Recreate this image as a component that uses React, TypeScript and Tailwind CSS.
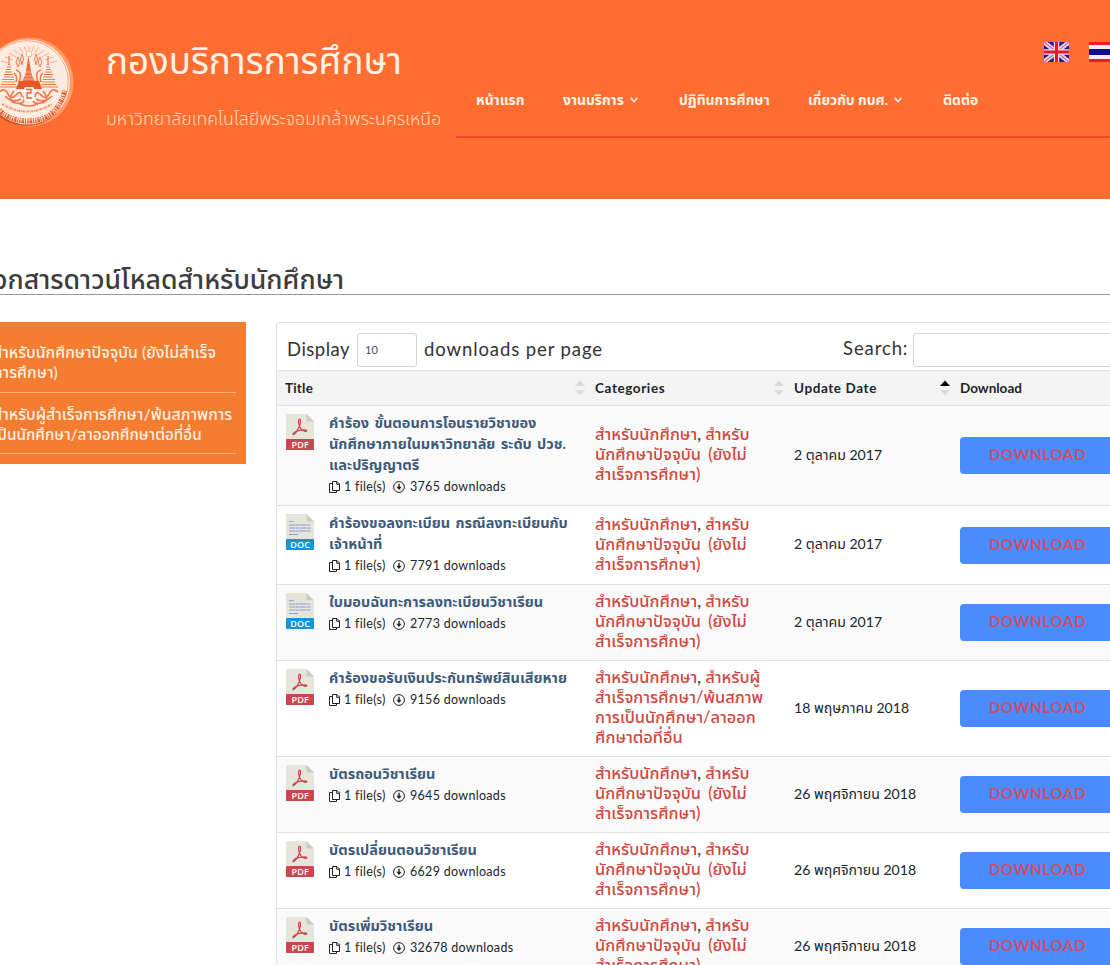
import React from "react";

type Doc = {
  kind: "PDF" | "DOC";
  title: string[];
  count: string;
  cats: string[];
  date: string;
  height: string;
};

const CURRENT = ["สำหรับ", "นักศึกษาปัจจุบัน (ยังไม่", "สำเร็จการศึกษา)"];
const GRADUATED = ["สำหรับผู้", "สำเร็จการศึกษา/พ้นสภาพ", "การเป็นนักศึกษา/ลาออก", "ศึกษาต่อที่อื่น"];

const DOCS: Doc[] = [
  {
    kind: "PDF",
    title: ["คำร้อง ขั้นตอนการโอนรายวิชาของ", "นักศึกษาภายในมหาวิทยาลัย ระดับ ปวช.", "และปริญญาตรี"],
    count: "3765",
    cats: CURRENT,
    date: "2 ตุลาคม 2017",
    height: "h-[100px]",
  },
  {
    kind: "DOC",
    title: ["คำร้องขอลงทะเบียน กรณีลงทะเบียนกับ", "เจ้าหน้าที่"],
    count: "7791",
    cats: CURRENT,
    date: "2 ตุลาคม 2017",
    height: "h-[79px]",
  },
  { kind: "DOC", title: ["ใบมอบฉันทะการลงทะเบียนวิชาเรียน"], count: "2773", cats: CURRENT, date: "2 ตุลาคม 2017", height: "h-[76px]" },
  { kind: "PDF", title: ["คำร้องขอรับเงินประกันทรัพย์สินเสียหาย"], count: "9156", cats: GRADUATED, date: "18 พฤษภาคม 2018", height: "h-[96px]" },
  { kind: "PDF", title: ["บัตรถอนวิชาเรียน"], count: "9645", cats: CURRENT, date: "26 พฤศจิกายน 2018", height: "h-[76px]" },
  { kind: "PDF", title: ["บัตรเปลี่ยนตอนวิชาเรียน"], count: "6629", cats: CURRENT, date: "26 พฤศจิกายน 2018", height: "h-[76px]" },
  { kind: "PDF", title: ["บัตรเพิ่มวิชาเรียน"], count: "32678", cats: CURRENT, date: "26 พฤศจิกายน 2018", height: "h-[76px]" },
];

function Seal() {
  return (
    <svg className="mt-[35px] -ml-[20px] h-[94px] w-[96px] shrink-0" viewBox="-20 35 96 94">
      <circle cx="29" cy="82" r="44.5" fill="#ff9a6b" />
      <circle cx="26.5" cy="83.500" r="42.500" fill="#b8431a" opacity="0.8" />
      <circle cx="27.5" cy="82" r="42.5" fill="#ffece0" />
      <circle cx="27" cy="82" r="41.300" fill="none" stroke="#f08a60" strokeWidth="0.7" />
      <g stroke="#f29a76" fill="none" strokeWidth="0.800">
        <path d="M29 46V50M24 46l2 5M34 46l-2 5M19 47l4 6M39 47l-4 6M14 50l6 5M44 50l-6 5M9 53l7 4M49 53l-7 4M5 57l8 3M53 57l-8 3M1 61l7 2M57 61l-7 2" />
      </g>
      <g stroke="#ed7a50" fill="none" strokeWidth="1.200">
        <path d="M-1 87h19M1 84.500h15M2 82h13M2 79.500h12M4 77h10M4 74.500h9M5 72h7M6 69.500h5M7 67h4M8 64.500h2M9 56v8" />
        <path d="M39 87h19M41 84.500h15M42 82h13M43 79.500h12M43 77h10M44 74.500h9M45 72h7M46 69.500h5M46 67h4M47 64.500h2M48 56v8" />
        <path d="M-1 92q6 -5 9 2t9 0q4 -4 5 3M58 92q-6 -5 -9 2t-9 0q-4 -4 -5 3M5 96q8 8 16 3M52 96q-8 8 -16 3M14 91q-8 10 2 12t8-7M43 91q8 10 -2 12t-8-7M20 104q9 4 18 0" strokeWidth="1.700" />
        <path d="M16 70q6 2 4 8t3 5M41 70q-6 2 -4 8t-3 5M14 73q4 4 2 9M43 73q-4 4 -2 9" strokeWidth="1.600" />
        <path d="M18 57l-2 5 2 5 2-5zM22 54l-1.500 5 1.500 6 1.500-6zM36 54l-1.500 5 1.500 6 1.500-6zM40 57l-2 5 2 5 2-5z" strokeWidth="1" />
      </g>
      <path d="M28.500 56l2 12 1 6 3 7h4l-1 6h-18l-1-6h4l3-7 1-6z" fill="#ec6f40" />
      <path d="M25 72h8M23.500 76h11M22 79h14" stroke="#ffd9c6" strokeWidth="0.600" />
      <circle cx="29" cy="54" r="3" fill="#fff" stroke="#f08a60" strokeWidth="0.700" />
      <path d="M19 81h20l3 8h-26z" fill="#e65a22" />
      <rect x="24" y="87" width="10" height="14" rx="1.500" fill="#fff6ef" />
      <path d="M26 89.500h5v3.500h-4v5h5" fill="none" stroke="#e2622f" strokeWidth="1.300" />
      <path d="M2 104q25 15 50 0" fill="none" stroke="#f39670" strokeWidth="2.200" strokeDasharray="2 0.800 1 0.600" />
      <path d="M-9 97q10 24 37 24q29 0 37 -31" fill="none" stroke="#e0602f" strokeWidth="5" strokeDasharray="1.400 0.900 2.500 0.800 1 1.100" />
      <path d="M-8 98q10 22 36 22q28 0 36 -30" fill="none" stroke="#fff4ec" strokeWidth="0.800" strokeDasharray="2 1.600" />
    </svg>
  );
}

function UkFlag() {
  return (
    <svg className="h-5 w-[25px] shrink-0" viewBox="0 0 25 20" preserveAspectRatio="none">
      <rect width="25" height="20" fill="#1d1d8c" />
      <path d="M0 0L25 20M25 0L0 20" stroke="#eed3e4" strokeWidth="4.500" />
      <path d="M0 0L25 20M25 0L0 20" stroke="#d5708a" strokeWidth="1.300" />
      <path d="M12.500 0V20M0 10H25" stroke="#f6d9e0" strokeWidth="5.500" />
      <path d="M12.500 0V20M0 10H25" stroke="#de1a2c" strokeWidth="3" />
    </svg>
  );
}

function ThaiFlag() {
  return (
    <div className="flex h-5 w-[30px] shrink-0 flex-col">
      <div className="h-[3px] bg-[#ee1c25]" />
      <div className="h-[4px] bg-[#fbe9f3]" />
      <div className="h-[6px] bg-[#100d8e]" />
      <div className="h-[4px] bg-[#fbe9f3]" />
      <div className="h-[3px] bg-[#ee1c25]" />
    </div>
  );
}

function Chevron() {
  return (
    <svg className="ml-[6px] h-[6px] w-2" viewBox="0 0 8 6" fill="none" stroke="#fff3ea" strokeWidth="1.500">
      <path d="M0.600 0.800L4 4.600L7.400 0.800" />
    </svg>
  );
}

function FileIcon({ kind }: { kind: "PDF" | "DOC" }) {
  return (
    <svg className="mt-2 h-9 w-7 shrink-0" viewBox="0 0 28 36">
      <path d="M0 0H20.500L28 7.500V26H0z" fill="#e5e5dc" />
      <path d="M20.500 0L28 7.500H20.500z" fill="#cccbbf" />
      <rect y="25" width="28" height="11" rx="0.600" fill={kind === "PDF" ? "#c8484f" : "#1194d8"} />
      {kind === "PDF" ? (
        <path
          d="M13.300 5.200c1.700-.8 1.300 3.800.2 6.800c-1 3-4.300 8.500-6 8.600c-1.600 0 .3-3 6-4.200c3.500-.8 7.300-.9 7.200.4c-.1 1.400-3.700.5-6-2.500c-2-2.700-2.900-8.300-1.400-9.100z"
          fill="none"
          stroke="#c8484f"
          strokeWidth="1.200"
        />
      ) : (
        <g stroke="#8c9bcf" strokeWidth="1.100">
          <path d="M3 7.500h5M3 20.500h9" strokeDasharray="3.500 0.700 5 0.600" />
          <path d="M3 11h22M3 14h22M3 17h22" strokeDasharray="6 0.500 4 0.500" />
        </g>
      )}
      <text x="14.200" y="33.800" textAnchor="middle" fontSize="9" fill="#fff" fontFamily="'Open Sans', sans-serif" fontWeight="600" letterSpacing="0.200">
        {kind}
      </text>
    </svg>
  );
}

function CopyIcon() {
  return (
    <svg className="h-3 w-[11px]" viewBox="0 0 11 12" fill="none" stroke="#222" strokeWidth="1">
      <path d="M3.500 0.500H8L10.500 3V9.500H3.500zM7.700 0.700V3.300H10.500M3.500 2.500H0.500V11.500H7.500V9.500" />
    </svg>
  );
}

function DownIcon() {
  return (
    <svg className="h-3 w-3" viewBox="0 0 12 12" fill="none" stroke="#222" strokeWidth="1">
      <circle cx="6" cy="6" r="5.400" />
      <path d="M6 2.800V7.500" strokeWidth="1.400" />
      <path d="M3.400 5.800L6 8.900L8.600 5.800z" fill="#222" stroke="none" />
    </svg>
  );
}

function Sort({ active }: { active?: boolean }) {
  return (
    <svg className="h-4 w-[10px]" viewBox="0 0 10 16">
      <path d="M0 6L5 0.500L10 6z" fill={active ? "#000" : "#d9d9d9"} />
      <path d="M0 10L5 15.500L10 10z" fill="#dcdcdc" />
    </svg>
  );
}

function Row({ doc, shaded }: { doc: Doc; shaded: boolean }) {
  return (
    <div className={`flex border-b border-[#dee2e6] ${doc.height} ${shaded ? "bg-[#fafafa]" : "bg-white"}`}>
      <div className="flex w-[310px] shrink-0 pl-[9px]">
        <FileIcon kind={doc.kind} />
        <div className="ml-[15px] pt-[6px]">
          {doc.title.map((line) => (
            <div key={line} className="h-[21px] text-[14.5px] leading-[21px] font-bold text-[#3e5a7b] [word-spacing:1.8px]">
              {line}
            </div>
          ))}
          <div className="mt-px flex h-[22px] items-center text-[12.5px] tracking-[0.3px] text-[#212529]">
            <CopyIcon />
            <span className="ml-1 w-[42px]">1 file(s)</span>
            <span className="ml-[7px]">
              <DownIcon />
            </span>
            <span className="ml-[5px]">{doc.count} downloads</span>
          </div>
        </div>
      </div>
      <div className="flex w-[199px] shrink-0 flex-col justify-center pb-[3px] pl-2 text-[16.4px] font-medium text-[#d0473c]">
        {doc.cats.map((line, i) => (
          <div key={line} className={i === 0 ? "h-5 leading-5" : "h-5 leading-5 [word-spacing:3px]"}>
            {i === 0 && (
              <>
                สำหรับนักศึกษา<span className="text-[#333]">, </span>
              </>
            )}
            {line}
          </div>
        ))}
      </div>
      <div className="flex w-[166px] shrink-0 items-center pb-[2px] pl-2 text-[14.1px] text-[#212529]">{doc.date}</div>
      <div className="flex items-center pl-2">
        <div className="flex h-[37px] w-[180px] items-center rounded bg-[#4a8cff] pb-[2px] pl-[29px] text-[15px] font-bold tracking-[0.7px] text-[#c9506a]">
          DOWNLOAD
        </div>
      </div>
    </div>
  );
}

export default function App() {
  return (
    <div className="h-[965px] w-[1110px] overflow-hidden bg-white font-[Lato,'Noto_Sans_Thai',sans-serif] whitespace-nowrap">
      <header className="flex h-[199px] border-b border-[#e8713c] bg-[#ff6e30]">
        <Seal />
        <div className="ml-[30px] w-[350px] shrink-0 text-[#fff3e8]">
          <div className="mt-[34px] h-[52px] text-[36.7px] leading-[52px]">กองบริการการศึกษา</div>
          <div className="mt-[20px] h-[26px] text-[17.7px] leading-[26px] font-light text-[#ffd9b5]">มหาวิทยาลัยเทคโนโลยีพระจอมเกล้าพระนครเหนือ</div>
        </div>
        <div className="w-[654px] shrink-0">
          <div className="flex pt-[42px] pl-[588px]">
            <UkFlag />
            <div className="w-5 shrink-0" />
            <ThaiFlag />
          </div>
          <nav className="mt-[26px] flex h-[50px] border-b-2 border-[#ef4723] pl-[20px] text-[13.9px] leading-6 font-bold text-[#fff3ea]">
            <span className="w-[87px]">หน้าแรก</span>
            <span className="flex h-6 w-[116px] items-center">
              งานบริการ
              <Chevron />
            </span>
            <span className="w-[129px]">ปฏิทินการศึกษา</span>
            <span className="flex h-6 w-[135px] items-center">
              เกี่ยวกับ กบศ.
              <Chevron />
            </span>
            <span>ติดต่อ</span>
          </nav>
        </div>
      </header>

      <h1 className="-ml-[16px] h-[96px] w-[1126px] border-b border-[#999] pt-[60px] text-[26.7px] leading-[40px] font-medium text-[#3c3c3c]">
        เอกสารดาวน์โหลดสำหรับนักศึกษา
      </h1>

      <div className="flex pt-[27px]">
        <aside className="-ml-[40px] h-[142px] w-[286px] shrink-0 bg-[#f47d31] pt-[20px] pr-[10px] pl-[33px] text-[15.8px] leading-5 font-medium text-[#fff0e0]">
          <div className="h-[51px] border-b border-[#f9b27f]">
            <div>สำหรับนักศึกษาปัจจุบัน (ยังไม่สำเร็จ</div>
            <div>การศึกษา)</div>
          </div>
          <div className="h-[61px] border-b border-[#f9b27f] pt-[11px]">
            <div>สำหรับผู้สำเร็จการศึกษา/พ้นสภาพการ</div>
            <div className="text-[15.300px]">เป็นนักศึกษา/ลาออกศึกษาต่อที่อื่น</div>
          </div>
        </aside>
        <main className="ml-[30px] w-[860px] shrink-0 rounded-tl-[3px] border border-[#dee2e6]">
          <div className="flex h-[48px] border-b border-[#dee2e6] pt-[10px] pl-[10px] text-[18.5px] text-[#333]">
            <span className="w-[70px] shrink-0 leading-8 tracking-[0.5px]">Display</span>
            <span className="flex h-[34px] w-[60px] shrink-0 items-center rounded-[3px] border border-[#ced4da] pl-[7px] text-[11px] text-[#495057]">10</span>
            <span className="ml-[7px] w-[419px] shrink-0 leading-8 tracking-[0.9px]">downloads per page</span>
            <span className="w-[70px] shrink-0 leading-[30px] tracking-[0.9px]">Search:</span>
            <span className="h-[34px] w-[230px] shrink-0 rounded-[3px] border border-[#ced4da]" />
          </div>
          <div className="flex h-[35px] items-center border-b border-[#dee2e6] bg-[#f4f4f4] text-[13.5px] font-bold text-[#212529]">
            <span className="flex w-[310px] shrink-0 items-center justify-between pr-[2px] pl-2 tracking-[0.2px]">
              Title
              <Sort />
            </span>
            <span className="flex w-[199px] shrink-0 items-center justify-between pr-[2px] pl-2 tracking-[0.6px]">
              Categories
              <Sort />
            </span>
            <span className="flex w-[166px] shrink-0 items-center justify-between pr-[2px] pl-2 tracking-[0.6px]">
              Update Date
              <Sort active />
            </span>
            <span className="pl-2">Download</span>
          </div>
          {DOCS.map((doc, i) => (
            <Row key={doc.title[0]} doc={doc} shaded={i % 2 === 0} />
          ))}
        </main>
      </div>
    </div>
  );
}
